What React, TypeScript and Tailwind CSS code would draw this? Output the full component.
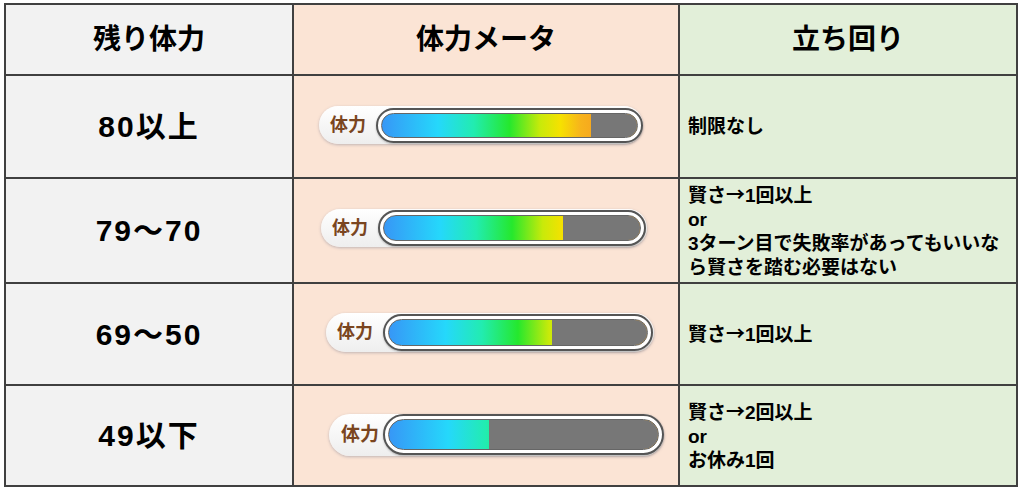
const FONT = { fontFamily: '"Liberation Sans", "Noto Sans CJK JP", sans-serif' };

interface MeterRow {
  value: string;
  pct: number;
  box: string;
  bar: string;
  label: string;
  notes: string[];
}

const ROWS: MeterRow[] = [
  {
    value: "80以上",
    pct: 82,
    box: "ml-[25px] w-[324px] h-[38px] -mt-[3px]",
    bar: "w-[267px] h-[35px]",
    label: "text-[18px] pl-[11px] w-[57px]",
    notes: ["制限なし"],
  },
  {
    value: "79〜70",
    pct: 70,
    box: "ml-[27px] w-[326px] h-[38px] -mt-[6px]",
    bar: "w-[268px] h-[36px]",
    label: "text-[18px] pl-[11px] w-[57px]",
    notes: ["賢さ→1回以上", "or", "3ターン目で失敗率があってもいいな", "ら賢さを踏む必要はない"],
  },
  {
    value: "69〜50",
    pct: 63,
    box: "ml-[32px] w-[328px] h-[39px] -mt-[4px]",
    bar: "w-[270px] h-[37px]",
    label: "text-[18px] pl-[11px] w-[57px]",
    notes: ["賢さ→1回以上"],
  },
  {
    value: "49以下",
    pct: 37,
    box: "ml-[35px] w-[335px] h-[42px] -mt-[2px]",
    bar: "w-[281px] h-[41px]",
    label: "text-[19px] pl-[12px] w-[54px]",
    notes: ["賢さ→2回以上", "or", "お休み1回"],
  },
];

// the arrow reads better with the CJK font's full-width glyph
function Note({ text }: { text: string }) {
  const parts = text.split("→");
  if (parts.length === 1) return <div>{text}</div>;
  return (
    <div>
      {parts[0]}
      <span className="font-['Noto_Sans_CJK_JP']">→</span>
      {parts[1]}
    </div>
  );
}

function Meter({ row }: { row: MeterRow }) {
  return (
    <div
      className={`${row.box} flex items-center rounded-full bg-gradient-to-b from-white to-[#eeeeee] shadow-[0_1px_3px_rgba(120,120,140,0.45)]`}
    >
      <span className={`${row.label} shrink-0 font-bold leading-none text-[#7a4520]`}>体力</span>
      <div
        className={`${row.bar} rounded-full border-[2px] border-[#555555] bg-white p-[3px] shadow-[0_1px_2px_rgba(0,0,0,0.25)]`}
      >
        <div className="flex h-full w-full overflow-hidden rounded-full border border-[#666666] bg-[linear-gradient(90deg,#3797f6_0%,#25d8fb_22%,#22ecb0_36%,#25e82d_50%,#c8ea0a_62%,#f6e100_70%,#f7b31c_78%,#f6a51f_84%)]">
          <div className="h-full" style={{ width: `${row.pct}%` }} />
          <div className="h-full flex-1 bg-[#777777]" />
        </div>
      </div>
    </div>
  );
}

export default function App() {
  return (
    <div className="h-[489px] w-[1024px] bg-white pl-[4px] pt-[3px]" style={FONT}>
      <div className="grid w-[1014px] grid-cols-[286px_384px_336px] grid-rows-[69px_101px_103px_100px_99px] gap-[2px] bg-[#404040] p-[2px] text-black">
        <div className="flex items-center justify-center bg-[#f2f2f2] text-[28px] font-bold">残り体力</div>
        <div className="flex items-center justify-center bg-[#fbe4d5] text-[28px] font-bold">体力メータ</div>
        <div className="flex items-center justify-center bg-[#e2efd9] text-[28px] font-bold">立ち回り</div>

        {ROWS.map((row) => (
          <div key={row.value} className="contents">
            <div className="flex items-center justify-center bg-[#f2f2f2] text-[30px] font-bold tracking-[2px]">
              {row.value}
            </div>
            <div className="flex items-center bg-[#fbe4d5]">
              <Meter row={row} />
            </div>
            <div className="flex flex-col justify-center bg-[#e2efd9] pl-[8px] text-[19px] font-bold leading-[24px]">
              {row.notes.map((n) => (
                <Note key={n + row.value} text={n} />
              ))}
            </div>
          </div>
        ))}
      </div>
    </div>
  );
}
